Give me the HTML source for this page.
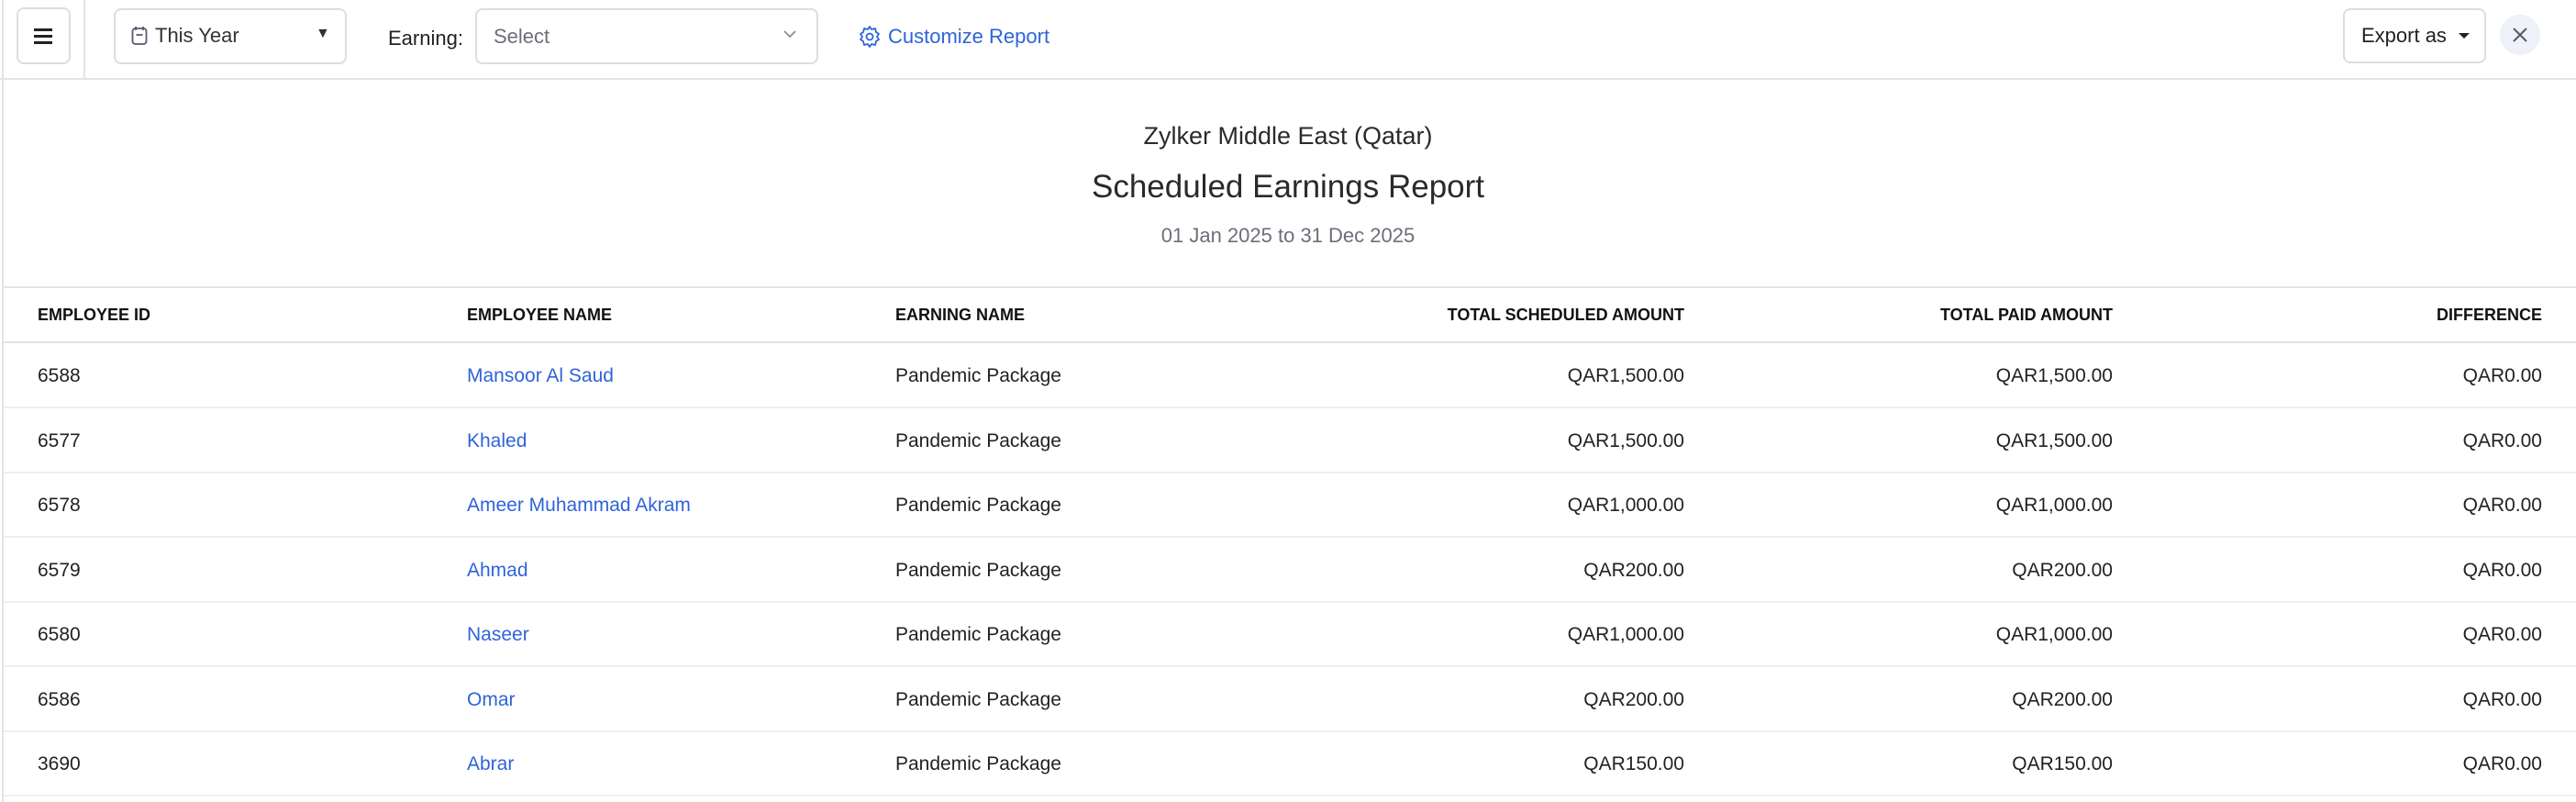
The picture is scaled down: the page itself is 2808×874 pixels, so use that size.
<!DOCTYPE html>
<html><head><meta charset="utf-8"><style>
*{box-sizing:border-box;margin:0;padding:0}
body{width:2808px;height:874px;overflow:hidden;background:#fff;font-family:"Liberation Sans",sans-serif;color:#222;position:relative}
.abs{position:absolute}
.box{position:absolute;border:2px solid #dcdde2;border-radius:8px;background:#fff}
.hdr{position:absolute;left:0;top:0;width:2808px;height:87px;border-bottom:2px solid #e3e4e8}
.lft{position:absolute;left:2px;top:0;width:2px;height:874px;background:#e3e4e8}
.t{position:absolute;white-space:nowrap}
.row{position:absolute;left:4px;width:2804px;height:71px;border-bottom:2px solid #eeeff2;font-size:21px}
.row span{position:absolute;top:24px;white-space:nowrap}
.r{text-align:right}
a{color:#2f64d8;text-decoration:none}
</style></head><body>
<div class="hdr"></div>
<div class="lft"></div>
<div class="abs" style="left:91px;top:0;width:2px;height:87px;background:#e3e4e8"></div>
<div class="box" style="left:18px;top:8px;width:59px;height:62px"></div>
<div class="abs" style="left:37px;top:31px;width:20px;height:3px;background:#222"></div>
<div class="abs" style="left:37px;top:38px;width:20px;height:3px;background:#222"></div>
<div class="abs" style="left:37px;top:45px;width:20px;height:3px;background:#222"></div>

<div class="box" style="left:124px;top:9px;width:254px;height:61px"></div>
<svg class="abs" style="left:143px;top:28px" width="18" height="22" viewBox="0 0 18 22"><rect x="1.5" y="3" width="15" height="17" rx="3" fill="none" stroke="#555a70" stroke-width="1.8"/><line x1="5" y1="1" x2="5" y2="5" stroke="#555a70" stroke-width="1.8"/><line x1="13" y1="1" x2="13" y2="5" stroke="#555a70" stroke-width="1.8"/><line x1="5.5" y1="10" x2="12.5" y2="10" stroke="#555a70" stroke-width="1.8"/></svg>
<div class="t" style="left:169px;top:26px;font-size:22px;color:#333">This Year</div>
<div class="t" style="left:344px;top:28px;font-size:16px;color:#333">▼</div>

<div class="t" style="left:423px;top:29px;font-size:22px;color:#222">Earning:</div>
<div class="box" style="left:518px;top:9px;width:374px;height:61px"></div>
<div class="t" style="left:538px;top:27px;font-size:22px;color:#6b6f7a">Select</div>
<svg class="abs" style="left:853px;top:31px" width="16" height="12" viewBox="0 0 16 12"><path d="M2 3 L8 9 L14 3" fill="none" stroke="#888" stroke-width="1.6"/></svg>

<svg class="abs" style="left:936px;top:27px" width="24" height="26" viewBox="0 0 24 26"><path d="M12 2 L14 5 L18 4 L19 8 L22 10 L20 13 L22 16 L19 18 L18 22 L14 21 L12 24 L10 21 L6 22 L5 18 L2 16 L4 13 L2 10 L5 8 L6 4 L10 5 Z" fill="none" stroke="#2f64d8" stroke-width="1.8" stroke-linejoin="round"/><circle cx="12" cy="13" r="3.5" fill="none" stroke="#2f64d8" stroke-width="1.8"/></svg>
<div class="t" style="left:968px;top:27px;font-size:22px;color:#2f64d8">Customize Report</div>

<div class="box" style="left:2554px;top:9px;width:156px;height:60px"></div>
<div class="t" style="left:2574px;top:26px;font-size:22px;color:#222">Export as</div>
<div class="abs" style="left:2680px;top:36px;width:0;height:0;border-left:6px solid transparent;border-right:6px solid transparent;border-top:6px solid #222"></div>
<div class="abs" style="left:2725px;top:16px;width:44px;height:44px;border-radius:50%;background:#eef1f8"></div>
<svg class="abs" style="left:2738px;top:29px" width="18" height="18" viewBox="0 0 18 18"><path d="M2 2 L16 16 M16 2 L2 16" stroke="#555a66" stroke-width="2"/></svg>

<div class="t" style="left:0;width:2808px;text-align:center;top:133px;font-size:27px;color:#2a2a2a">Zylker Middle East (Qatar)</div>
<div class="t" style="left:0;width:2808px;text-align:center;top:184px;font-size:35px;color:#2a2a2a">Scheduled Earnings Report</div>
<div class="t" style="left:0;width:2808px;text-align:center;top:244px;font-size:22px;color:#6b6f7a">01 Jan 2025 to 31 Dec 2025</div>

<div class="abs" style="left:4px;top:312px;width:2804px;height:2px;background:#e3e4e8"></div>
<div class="row" style="top:314px;height:60px;border-bottom:2px solid #e3e4e8;font-size:18px;font-weight:bold;color:#111">
<span style="left:37px;top:19px">EMPLOYEE ID</span><span style="left:505px;top:19px">EMPLOYEE NAME</span><span style="left:972px;top:19px">EARNING NAME</span>
<span class="r" style="right:972px;top:19px">TOTAL SCHEDULED AMOUNT</span><span class="r" style="right:505px;top:19px">TOTAL PAID AMOUNT</span><span class="r" style="right:37px;top:19px">DIFFERENCE</span></div>

<div class="row" style="top:374px"><span style="left:37px">6588</span><span style="left:505px"><a>Mansoor Al Saud</a></span><span style="left:972px">Pandemic Package</span><span style="right:972px">QAR1,500.00</span><span style="right:505px">QAR1,500.00</span><span style="right:37px">QAR0.00</span></div>
<div class="row" style="top:445px"><span style="left:37px">6577</span><span style="left:505px"><a>Khaled</a></span><span style="left:972px">Pandemic Package</span><span style="right:972px">QAR1,500.00</span><span style="right:505px">QAR1,500.00</span><span style="right:37px">QAR0.00</span></div>
<div class="row" style="top:515px"><span style="left:37px">6578</span><span style="left:505px"><a>Ameer Muhammad Akram</a></span><span style="left:972px">Pandemic Package</span><span style="right:972px">QAR1,000.00</span><span style="right:505px">QAR1,000.00</span><span style="right:37px">QAR0.00</span></div>
<div class="row" style="top:586px"><span style="left:37px">6579</span><span style="left:505px"><a>Ahmad</a></span><span style="left:972px">Pandemic Package</span><span style="right:972px">QAR200.00</span><span style="right:505px">QAR200.00</span><span style="right:37px">QAR0.00</span></div>
<div class="row" style="top:656px"><span style="left:37px">6580</span><span style="left:505px"><a>Naseer</a></span><span style="left:972px">Pandemic Package</span><span style="right:972px">QAR1,000.00</span><span style="right:505px">QAR1,000.00</span><span style="right:37px">QAR0.00</span></div>
<div class="row" style="top:727px"><span style="left:37px">6586</span><span style="left:505px"><a>Omar</a></span><span style="left:972px">Pandemic Package</span><span style="right:972px">QAR200.00</span><span style="right:505px">QAR200.00</span><span style="right:37px">QAR0.00</span></div>
<div class="row" style="top:797px"><span style="left:37px">3690</span><span style="left:505px"><a>Abrar</a></span><span style="left:972px">Pandemic Package</span><span style="right:972px">QAR150.00</span><span style="right:505px">QAR150.00</span><span style="right:37px">QAR0.00</span></div>
</body></html>
